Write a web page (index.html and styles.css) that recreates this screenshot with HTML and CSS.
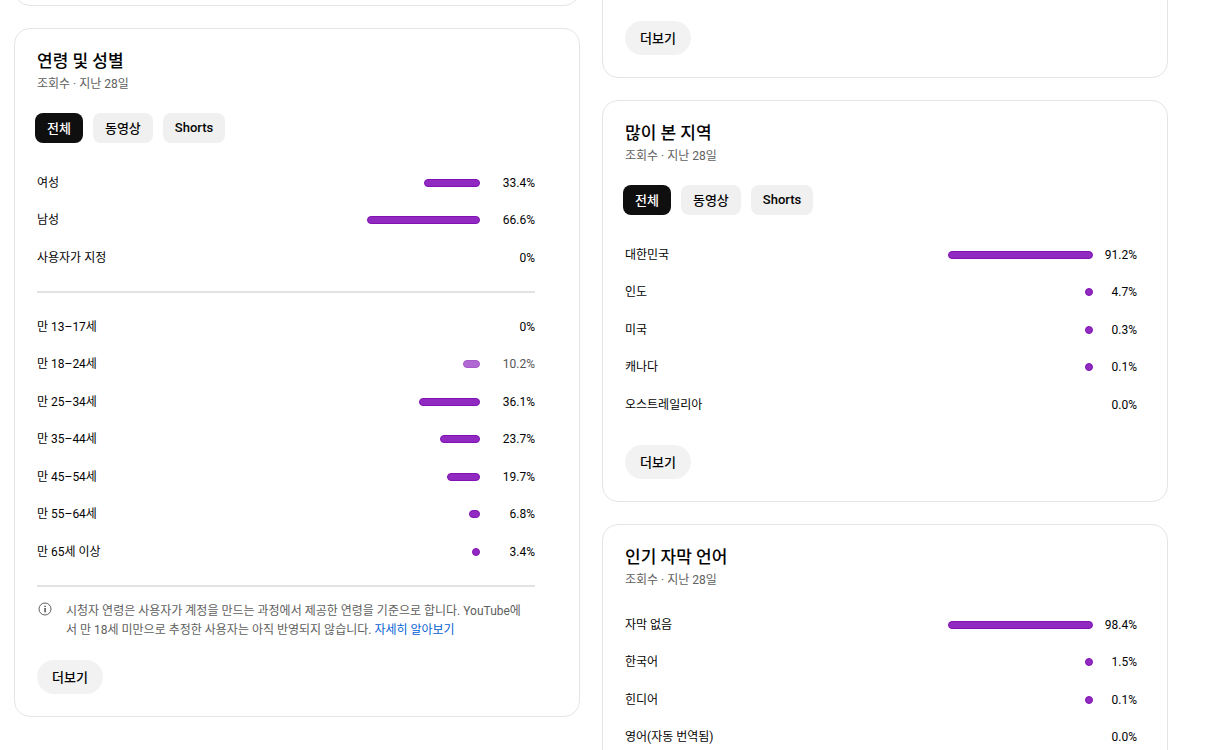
FILE: index.html
```html
<!DOCTYPE html>
<html lang="ko">
<head>
  <meta charset="UTF-8">
  <meta name="viewport" content="width=device-width, initial-scale=1.0">
  <title>시청자층</title>
  <link rel="stylesheet" href="styles.css">
</head>
<body>
  <main class="dashboard">
    <div class="column">
      <section class="card card-previous"></section>

      <section class="card card-demographics">
        <h2>연령 및 성별</h2>
        <p class="subtitle">조회수 · 지난 28일</p>
        <div class="chips">
          <button class="chip active">전체</button>
          <button class="chip">동영상</button>
          <button class="chip">Shorts</button>
        </div>
        <table class="stats">
          <tr><th scope="row">여성</th><td class="track"><div class="bar" style="width: 33.4%"></div></td><td class="value">33.4%</td></tr>
          <tr><th scope="row">남성</th><td class="track"><div class="bar" style="width: 66.6%"></div></td><td class="value">66.6%</td></tr>
          <tr><th scope="row">사용자가 지정</th><td class="track"></td><td class="value">0%</td></tr>
        </table>
        <hr>
        <table class="stats">
          <tr><th scope="row">만 13–17세</th><td class="track"></td><td class="value">0%</td></tr>
          <tr class="fading"><th scope="row">만 18–24세</th><td class="track"><div class="bar" style="width: 10.2%"></div></td><td class="value">10.2%</td></tr>
          <tr><th scope="row">만 25–34세</th><td class="track"><div class="bar" style="width: 36.1%"></div></td><td class="value">36.1%</td></tr>
          <tr><th scope="row">만 35–44세</th><td class="track"><div class="bar" style="width: 23.7%"></div></td><td class="value">23.7%</td></tr>
          <tr><th scope="row">만 45–54세</th><td class="track"><div class="bar" style="width: 19.7%"></div></td><td class="value">19.7%</td></tr>
          <tr><th scope="row">만 55–64세</th><td class="track"><div class="bar" style="width: 6.8%"></div></td><td class="value">6.8%</td></tr>
          <tr><th scope="row">만 65세 이상</th><td class="track"><div class="bar" style="width: 3.4%"></div></td><td class="value">3.4%</td></tr>
        </table>
        <hr>
        <div class="note">
          <svg class="info-icon" viewBox="0 0 14 14" width="14" height="14" aria-hidden="true">
            <circle cx="7" cy="7" r="6" fill="none" stroke="#606060" stroke-width="1"/>
            <path d="M6.4 3.7h1.3v1.3H6.4zM6.4 6h1.3v4.3H6.4z" fill="#333"/>
          </svg>
          <p>시청자 연령은 사용자가 계정을 만드는 과정에서 제공한 연령을 기준으로 합니다. YouTube에서 만 18세 미만으로 추정한 사용자는 아직 반영되지 않습니다. <a href="#">자세히 알아보기</a></p>
        </div>
        <button class="more">더보기</button>
      </section>
    </div>

    <div class="column">
      <section class="card card-cropped">
        <button class="more">더보기</button>
      </section>

      <section class="card">
        <h2>많이 본 지역</h2>
        <p class="subtitle">조회수 · 지난 28일</p>
        <div class="chips">
          <button class="chip active">전체</button>
          <button class="chip">동영상</button>
          <button class="chip">Shorts</button>
        </div>
        <table class="stats">
          <tr><th scope="row">대한민국</th><td class="track"><div class="bar" style="width: 100%"></div></td><td class="value">91.2%</td></tr>
          <tr><th scope="row">인도</th><td class="track"><div class="bar" style="width: 5%"></div></td><td class="value">4.7%</td></tr>
          <tr><th scope="row">미국</th><td class="track"><div class="bar" style="width: 1%"></div></td><td class="value">0.3%</td></tr>
          <tr><th scope="row">캐나다</th><td class="track"><div class="bar" style="width: 1%"></div></td><td class="value">0.1%</td></tr>
          <tr><th scope="row">오스트레일리아</th><td class="track"></td><td class="value">0.0%</td></tr>
        </table>
        <button class="more">더보기</button>
      </section>

      <section class="card">
        <h2>인기 자막 언어</h2>
        <p class="subtitle">조회수 · 지난 28일</p>
        <table class="stats">
          <tr><th scope="row">자막 없음</th><td class="track"><div class="bar" style="width: 100%"></div></td><td class="value">98.4%</td></tr>
          <tr><th scope="row">한국어</th><td class="track"><div class="bar" style="width: 2%"></div></td><td class="value">1.5%</td></tr>
          <tr><th scope="row">힌디어</th><td class="track"><div class="bar" style="width: 1%"></div></td><td class="value">0.1%</td></tr>
          <tr><th scope="row">영어(자동 번역됨)</th><td class="track"></td><td class="value">0.0%</td></tr>
        </table>
      </section>
    </div>
  </main>
</body>
</html>
```
FILE: styles.css
```css
* {
  box-sizing: border-box;
}

body {
  height: 100vh;
  margin: 0;
  overflow: hidden;
  background-color: #fff;
  color: #030303;
  font-family: Roboto, "Noto Sans CJK KR", sans-serif;
  font-size: 12px;
}

/* the page is scrolled a little, so the first cards start above the window */
.dashboard {
  display: grid;
  grid-template-columns: 1fr 1fr;
  align-items: start;
  gap: 22px;
  margin-top: -60px;
  padding: 0 41px 0 14px;
}

.column {
  display: flex;
  flex-direction: column;
  gap: 22px;
}

.card {
  padding: 20px 30px 22px 22px;
  border: 1px solid #e5e5e5;
  border-radius: 16px;
  background-color: #fff;
}

.card-previous {
  min-height: 66px;
}

.card-cropped {
  padding-top: 58px;
}

.card-demographics {
  padding-right: 44px;
}

h2 {
  margin: 0;
  font-size: 17px;
  font-weight: 500;
  line-height: 24px;
}

.subtitle {
  margin: 2px 0 0;
  color: #606060;
  line-height: 18px;
}

button {
  display: block;
  border: none;
  color: #030303;
  cursor: pointer;
  font-family: inherit;
  font-size: 13px;
  font-weight: 500;
}

.chips {
  display: flex;
  gap: 10px;
  margin: 20px 0 0 -2px;
}

.chip {
  height: 30px;
  padding: 0 12px 2px;
  border-radius: 8px;
  background-color: #f0f0f0;
}

.chip.active {
  background-color: #0f0f0f;
  color: #fff;
}

.stats {
  width: 100%;
  margin-top: 17px;
  border-collapse: collapse;
}

.chips + .stats {
  margin-top: 21px;
}

hr + .stats {
  margin-top: 0;
}

.stats tr {
  height: 37px;
}

.stats tr:nth-child(even) {
  height: 38px;
}

.stats th,
.stats td {
  padding: 0;
  font-weight: 400;
  line-height: 18px;
  text-align: left;
}

.stats .track {
  width: 145px;
}

.stats .value {
  width: 44px;
  text-align: right;
}

.card-demographics .track {
  width: 169px;
}

.card-demographics .value {
  width: 55px;
}

.bar {
  min-width: 8px;
  height: 8px;
  margin-left: auto;
  border: 1px solid #8212b4;
  border-radius: 4px;
  background-color: #902ac0;
}

.fading .bar {
  opacity: 0.7;
}

.fading .value {
  color: #555;
}

hr {
  height: 2px;
  margin: 15px 0;
  border: none;
  background-color: #e2e2e2;
}

.note {
  display: flex;
  gap: 14px;
  padding: 0 8px 0 1px;
  color: #606060;
}

.note p {
  margin: 0;
  line-height: 19px;
  word-break: break-all;
}

.note a {
  color: #065fd4;
  text-decoration: none;
}

.info-icon {
  flex: none;
}

.more {
  height: 34px;
  margin-top: 22px;
  padding: 0 15px 2px;
  border-radius: 17px;
  background-color: #f2f2f2;
}

.note + .more {
  margin-top: 20px;
}
```
